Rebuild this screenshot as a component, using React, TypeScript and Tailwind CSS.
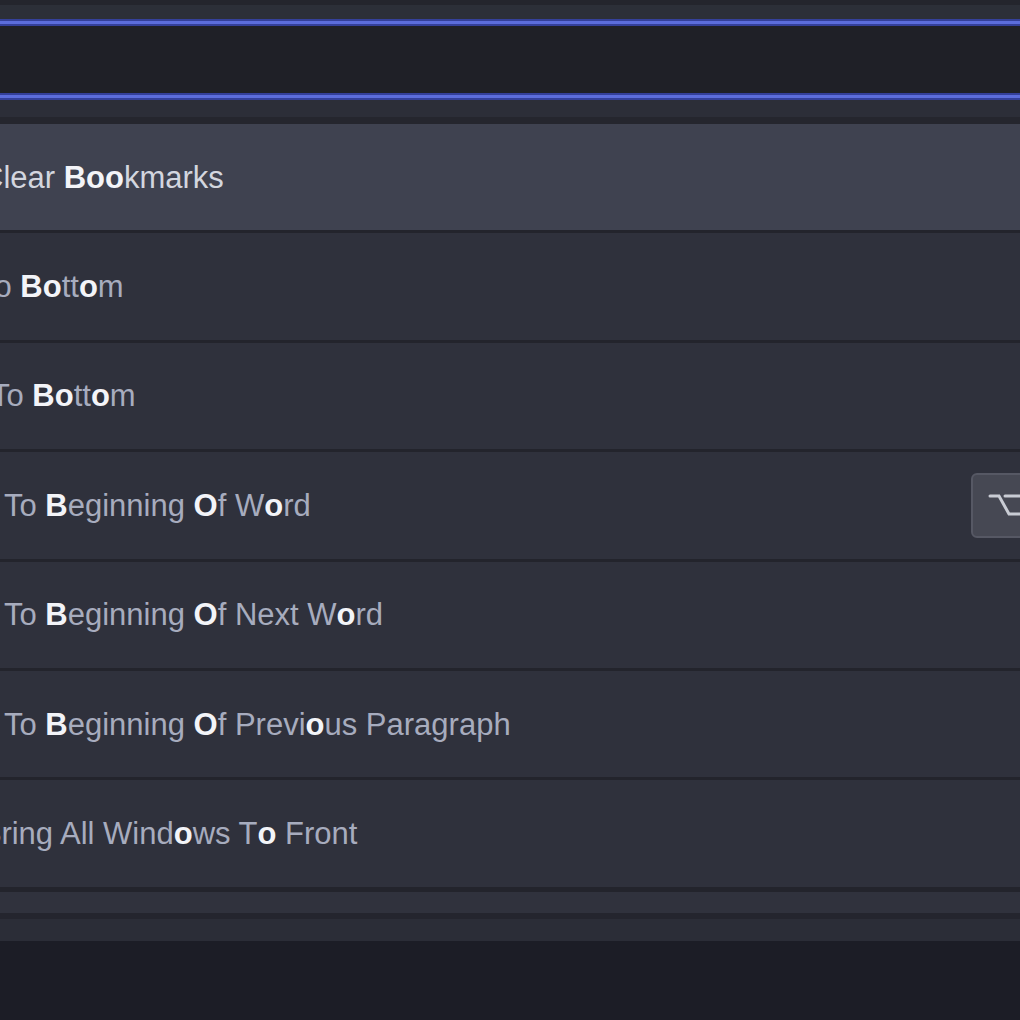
import React from "react";

type Part = { t: string; m?: boolean };

interface Row {
  parts: Part[];
  offset: string;
  selected?: boolean;
  key?: boolean;
}

const rows: Row[] = [
  {
    parts: [{ t: "Clear " }, { t: "Boo", m: true }, { t: "kmarks" }],
    offset: "ml-[-19px]",
    selected: true,
  },
  {
    parts: [{ t: "To " }, { t: "Bo", m: true }, { t: "tt" }, { t: "o", m: true }, { t: "m" }],
    offset: "ml-[-21px]",
  },
  {
    parts: [{ t: "To " }, { t: "Bo", m: true }, { t: "tt" }, { t: "o", m: true }, { t: "m" }],
    offset: "ml-[-9px]",
  },
  {
    parts: [
      { t: "To " },
      { t: "B", m: true },
      { t: "eginning " },
      { t: "O", m: true },
      { t: "f W" },
      { t: "o", m: true },
      { t: "rd" },
    ],
    offset: "ml-[4px]",
    key: true,
  },
  {
    parts: [
      { t: "To " },
      { t: "B", m: true },
      { t: "eginning " },
      { t: "O", m: true },
      { t: "f Next W" },
      { t: "o", m: true },
      { t: "rd" },
    ],
    offset: "ml-[4px]",
  },
  {
    parts: [
      { t: "To " },
      { t: "B", m: true },
      { t: "eginning " },
      { t: "O", m: true },
      { t: "f Previ" },
      { t: "o", m: true },
      { t: "us Paragraph" },
    ],
    offset: "ml-[4px]",
  },
  {
    parts: [
      { t: "B", m: true },
      { t: "ring All Wind" },
      { t: "o", m: true },
      { t: "ws T" },
      { t: "o", m: true },
      { t: " Front" },
    ],
    offset: "ml-[-21px]",
  },
];

function AccentLine() {
  return (
    <div className="flex flex-col">
      <div className="h-[2px] bg-[#34409a]" />
      <div className="h-[3px] bg-[#5c6ddb]" />
      <div className="h-[2px] bg-[#34409a]" />
    </div>
  );
}

function OptionKey() {
  return (
    <div className="ml-auto mr-[-40px] flex h-[65px] w-[89px] shrink-0 items-center rounded-[6px] border-2 border-[#565864] bg-[#464853] pl-[14px]">
      <svg width="40" height="28" viewBox="0 0 40 28" fill="none" stroke="#c9ccd4" strokeWidth="3" strokeLinecap="round">
        <path d="M3 5 H12 L22 23 H36" />
        <path d="M18 5 H36" />
      </svg>
    </div>
  );
}

function CommandRow({ row }: { row: Row }) {
  return (
    <div
      className={
        "flex h-[109.4px] items-center overflow-hidden border-b-[3px] border-[#23242c] " +
        (row.selected ? "bg-[#3f4250]" : "bg-[#2f313c]")
      }
    >
      <span
        className={
          "whitespace-nowrap text-[31px] leading-none " +
          row.offset +
          (row.selected ? " text-[#d3d6df]" : " text-[#a7acbe]")
        }
      >
        {row.parts.map((p, i) =>
          p.m ? (
            <b key={i} className="font-bold text-[#f3f4f8]">
              {p.t}
            </b>
          ) : (
            <span key={i}>{p.t}</span>
          )
        )}
      </span>
      {row.key && <OptionKey />}
    </div>
  );
}

export default function App() {
  return (
    <div className="flex h-[1020px] w-[1020px] flex-col overflow-hidden bg-[#1c1d26] font-['Liberation_Sans',Arial,sans-serif]">
      <div className="h-[5px] bg-[#24252d]" />
      <div className="h-[14px] bg-[#2c2f38]" />
      <AccentLine />
      <div className="h-[67px] bg-[#1f2027]" />
      <AccentLine />
      <div className="h-[17px] bg-[#2c2e38]" />
      <div className="h-[7px] bg-[#25262e]" />
      {rows.map((r, i) => (
        <CommandRow key={i} row={r} />
      ))}
      <div className="h-[2px] bg-[#23242c]" />
      <div className="h-[21px] bg-[#30323d]" />
      <div className="h-[6px] bg-[#24252e]" />
      <div className="h-[22px] bg-[#2b2d37]" />
    </div>
  );
}
